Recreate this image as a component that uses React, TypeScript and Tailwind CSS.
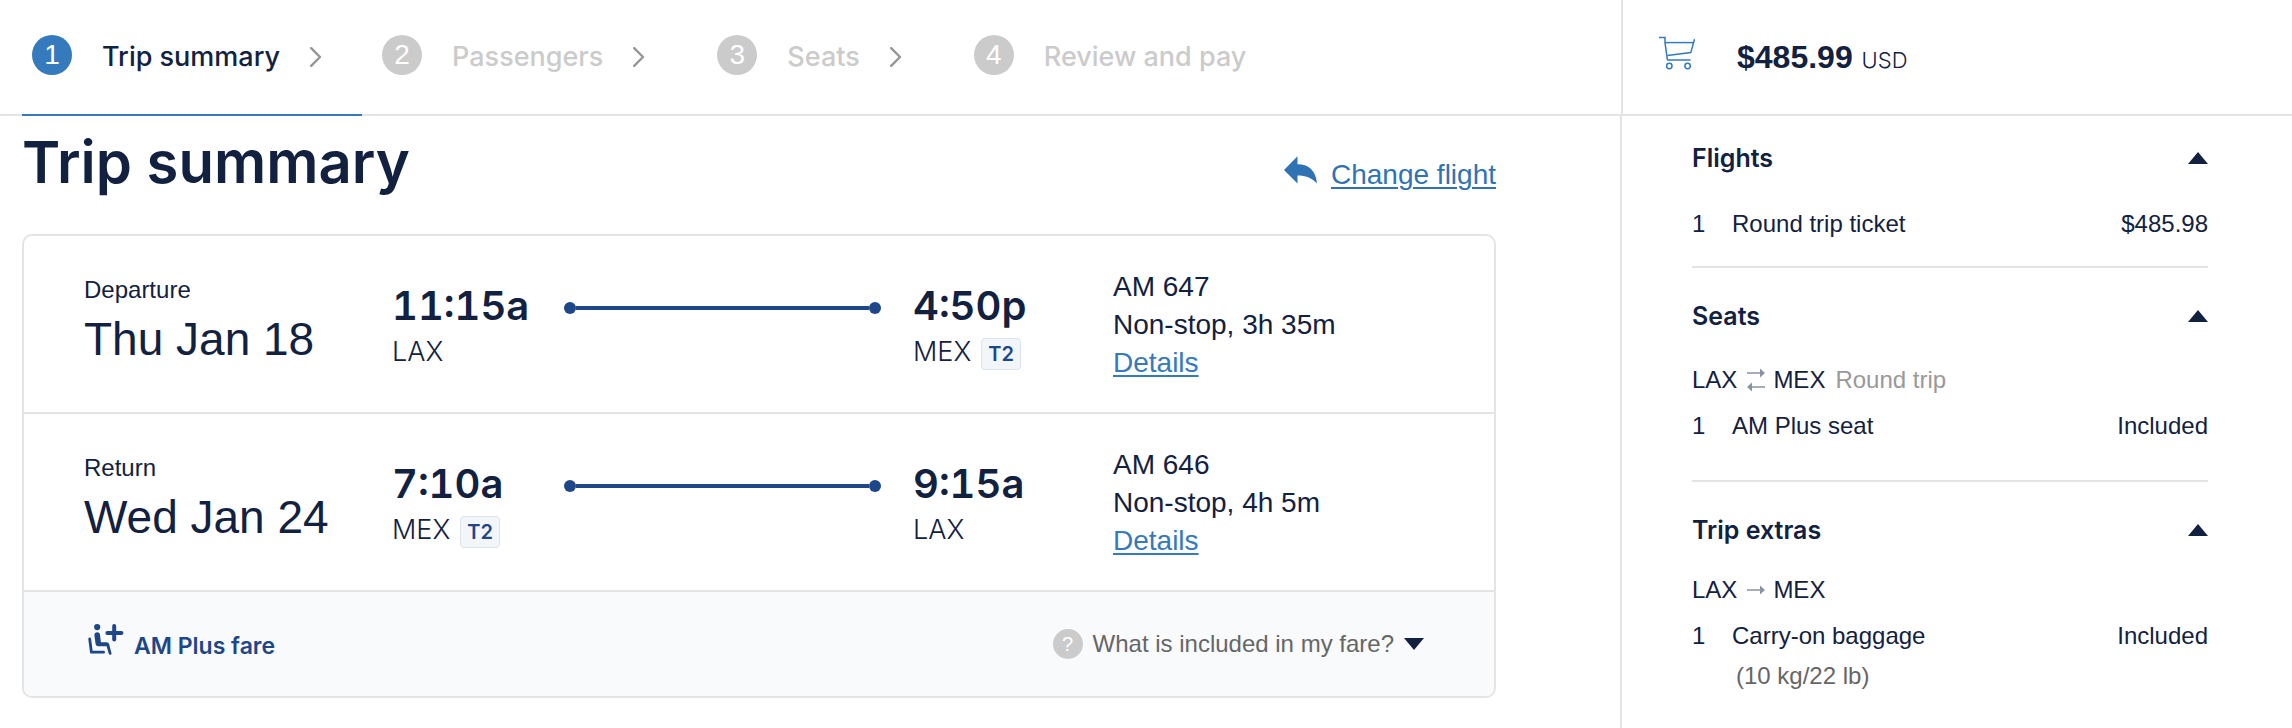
import React, { useState } from 'react';

type Step = { id: number; label: string };

type Leg = {
  title: string;
  date: string;
  departTime: string;
  departCode: string;
  departTerminal?: string;
  arriveTime: string;
  arriveCode: string;
  arriveTerminal?: string;
  flight: string;
  duration: string;
};

const steps: Step[] = [
  { id: 1, label: 'Trip summary' },
  { id: 2, label: 'Passengers' },
  { id: 3, label: 'Seats' },
  { id: 4, label: 'Review and pay' },
];

const legs: Leg[] = [
  {
    title: 'Departure',
    date: 'Thu Jan 18',
    departTime: '11:15a',
    departCode: 'LAX',
    arriveTime: '4:50p',
    arriveCode: 'MEX',
    arriveTerminal: 'T2',
    flight: 'AM 647',
    duration: 'Non-stop, 3h 35m',
  },
  {
    title: 'Return',
    date: 'Wed Jan 24',
    departTime: '7:10a',
    departCode: 'MEX',
    departTerminal: 'T2',
    arriveTime: '9:15a',
    arriveCode: 'LAX',
    flight: 'AM 646',
    duration: 'Non-stop, 4h 5m',
  },
];

const ChevronIcon = () => (
  <svg width="12" height="26" viewBox="0 0 12 26" fill="none" className="shrink-0" aria-hidden="true">
    <path d="M1.2 4.2L10 13L1.2 21.8" stroke="#969696" strokeWidth="2.4" strokeLinecap="round" strokeLinejoin="round" />
  </svg>
);

const CartIcon = () => (
  <svg width="36" height="34" viewBox="0 0 36 34" fill="none" stroke="#357abd" strokeWidth="1.5" aria-hidden="true">
    <path d="M0 1.6H6V6.6L8.4 23.8" />
    <path d="M6 6.6H34.5" />
    <path d="M35.5 3.2L31.8 16.6L8.4 19.6" />
    <path d="M8 24H31.5" />
    <circle cx="10.3" cy="30" r="2.7" />
    <circle cx="28.6" cy="30" r="2.7" />
  </svg>
);

const ReplyIcon = () => (
  <svg width="33" height="28" viewBox="0 0 33 28" fill="#3073b5" aria-hidden="true">
    <path d="M0 14L13.5 0.3V8.2C23.5 8 32 13.5 33 27.5C27.5 21.5 21 19.3 13.5 19.4V27.6Z" />
  </svg>
);

// Seated passenger with a plus sign
const SeatPlusIcon = () => (
  <svg width="36" height="31" viewBox="0 0 36 31" fill="none" stroke="#1d4789" strokeLinecap="round" strokeLinejoin="round" aria-hidden="true">
    <circle cx="9.2" cy="3.1" r="3.1" fill="#1d4789" stroke="none" />
    <path
      d="M6.4 11.2C6.2 7.6 11.6 7.4 12 10.8L12.9 18.2H18.6C20 18.2 20.8 18.9 21.2 20.2L23.5 29.2C23.8 31 21.2 31.2 20.8 29.8L18.6 22.2H10.3C8.6 22.2 7.7 21.2 7.5 19.6Z"
      fill="#1d4789"
      stroke="none"
    />
    <path d="M1.7 15L3.4 28.2H15.6" strokeWidth="2.8" />
    <path d="M26.2 2V15.6M19.4 9H33.4" strokeWidth="4" />
  </svg>
);

const Triangle = ({ down = false }: { down?: boolean }) => (
  <svg width="20" height="12" viewBox="0 0 20 12" fill="#12213f" className="shrink-0" aria-hidden="true">
    {down ? <path d="M0 0H20L10 12Z" /> : <path d="M0 12H20L10 0Z" />}
  </svg>
);

const RouteArrow = ({ roundTrip = false }: { roundTrip?: boolean }) => (
  <svg width="18" height="24" viewBox="0 0 18 24" fill="#8a93a5" className="shrink-0" aria-hidden="true">
    {roundTrip ? (
      <>
        <path d="M0 4.2H13V0.4L18 5L13 9.6V5.8H0Z" />
        <path d="M18 18.2H5V14.4L0 19L5 23.6V19.8H18Z" />
      </>
    ) : (
      <path d="M0 11.2H13V7.4L18 12L13 16.6V12.8H0Z" />
    )}
  </svg>
);

const Stop = ({ time, code, terminal }: { time: string; code: string; terminal?: string }) => (
  <div className="pt-3 font-['Inter',sans-serif]">
    <p className="text-[40px] leading-13 font-semibold tabular-nums">{time}</p>
    <div className="flex h-10 items-center gap-2.5">
      <span className="text-[27px] leading-9 font-light">{code}</span>
      {terminal && (
        <span className="mt-1 flex h-8 items-center rounded-sm border border-[#dbe3ec] bg-[#f2f5f9] px-1.5 text-xl font-semibold text-[#1d4789]">
          {terminal}
        </span>
      )}
    </div>
  </div>
);

const LegRow = ({ leg }: { leg: Leg }) => (
  <div className="grid grid-cols-[308px_172px_1fr_232px_381px] items-start border-b-2 border-[#e4e4e4] pt-8 pb-7.5 pl-15">
    <div className="pt-1">
      <p className="text-2xl leading-9">{leg.title}</p>
      <p className="text-[46px] leading-[62px]">{leg.date}</p>
    </div>
    <Stop time={leg.departTime} code={leg.departCode} terminal={leg.departTerminal} />
    <div className="flex items-center pt-8.5" aria-hidden="true">
      <span className="size-3 rounded-full bg-[#1d4789]" />
      <span className="h-1 flex-1 bg-[#1d4789]" />
      <span className="size-3 rounded-full bg-[#1d4789]" />
    </div>
    <div className="pl-8">
      <Stop time={leg.arriveTime} code={leg.arriveCode} terminal={leg.arriveTerminal} />
    </div>
    <div className="text-[28px] leading-[38px]">
      <p>{leg.flight}</p>
      <p>{leg.duration}</p>
      <a href="#details" className="text-[#357abd] underline decoration-2 underline-offset-3">Details</a>
    </div>
  </div>
);

const CartSection = ({ title, children }: { title: string; children: React.ReactNode }) => {
  const [open, setOpen] = useState(true);

  return (
    <section className="border-b-2 border-[#e4e4e4] pt-7.5 first:pt-6 last:border-b-0">
      <h2>
        <button
          type="button"
          aria-expanded={open}
          onClick={() => setOpen(!open)}
          className="flex w-full items-center justify-between font-['Inter',sans-serif] text-[25px] leading-9 font-semibold"
        >
          {title}
          <Triangle down={!open} />
        </button>
      </h2>
      {open && children}
    </section>
  );
};

const CartItem = ({ name, price }: { name: string; price: string }) => (
  <div className="flex text-2xl leading-8">
    <span className="w-10">1</span>
    <span className="flex-1">{name}</span>
    <span>{price}</span>
  </div>
);

const App: React.FC = () => {
  const [activeStep] = useState(1);

  return (
    <div className="min-h-screen bg-white font-['Liberation_Sans',Arial,sans-serif] text-[#12213f]">
      <header className="flex border-b-2 border-[#e4e4e4]">
        <nav className="flex-1 pl-[22px]">
          <ol className="-mb-0.5 flex">
            {steps.map(step => {
              const active = step.id === activeStep;
              return (
                <li
                  key={step.id}
                  aria-current={active ? 'step' : undefined}
                  className={`flex h-29 items-center border-b-2 pb-1 ${active ? 'border-[#357abd] pr-10 pl-2.5' : 'border-transparent pr-[52px] pl-5 text-[#cbcbcb]'}`}
                >
                  <span className={`flex size-10 items-center justify-center rounded-full text-[28px] text-white ${active ? 'bg-[#357abd]' : 'bg-[#cbcbcb]'}`}>
                    {step.id}
                  </span>
                  <div className="flex items-center pt-1">
                    <span className="px-[30px] font-['Inter',sans-serif] text-[27px] font-medium">{step.label}</span>
                    {step.id < steps.length && <ChevronIcon />}
                  </div>
                </li>
              );
            })}
          </ol>
        </nav>
        <div className="flex w-[671px] items-center border-l-2 border-[#e4e4e4] pl-9">
          <div className="pb-2">
            <CartIcon />
          </div>
          <p className="pl-[42px] text-[32px] font-bold">
            $485.99 <span className="font-['Inter',sans-serif] text-[22px] font-light">USD</span>
          </p>
        </div>
      </header>

      <div className="flex">
        <main className="flex-1 pr-31 pl-[22px]">
          <div className="flex h-[118px] items-start justify-between">
            <h1 className="pt-1 font-['Inter',sans-serif] text-[58px] leading-[84px] font-semibold">Trip summary</h1>
            <a href="#change" className="flex items-start gap-3.5 pt-10 text-[28px] leading-[38px] text-[#3073b5]">
              <ReplyIcon />
              <span className="underline decoration-2 underline-offset-3">Change flight</span>
            </a>
          </div>

          <div className="overflow-hidden rounded-[10px] border-2 border-[#e4e4e4]">
            {legs.map(leg => (
              <LegRow key={leg.title} leg={leg} />
            ))}
            <div className="flex h-26 items-center justify-between bg-[#f9fafc] pr-[70px] pl-16">
              <div className="flex items-start gap-2.5 font-['Inter',sans-serif] text-[23px] leading-9 font-semibold text-[#1d4789]">
                <SeatPlusIcon />
                <span className="pt-1">AM Plus fare</span>
              </div>
              <button type="button" className="flex items-center gap-2.5 text-2xl text-[#666]">
                <span className="flex size-[30px] items-center justify-center rounded-full bg-[#cbcbcb] text-xl text-white">?</span>
                What is included in my fare?
                <Triangle down />
              </button>
            </div>
          </div>
        </main>

        <aside className="min-h-[612px] w-[672px] border-l-2 border-[#e4e4e4] pr-21 pl-[70px]">
          <CartSection title="Flights">
            <div className="pt-8 pb-6.5">
              <CartItem name="Round trip ticket" price="$485.98" />
            </div>
          </CartSection>
          <CartSection title="Seats">
            <div className="pt-7.5 pb-9.5 text-2xl leading-8">
              <p className="mb-3.5 flex items-center">
                LAX<span className="pr-2 pl-2.5"><RouteArrow roundTrip /></span>MEX
                <span className="pl-2.5 text-[#999]">Round trip</span>
              </p>
              <CartItem name="AM Plus seat" price="Included" />
            </div>
          </CartSection>
          <CartSection title="Trip extras">
            <div className="pt-6.5 text-2xl leading-8">
              <p className="mb-3.5 flex items-center">
                LAX<span className="pr-2 pl-2.5"><RouteArrow /></span>MEX
              </p>
              <CartItem name="Carry-on baggage" price="Included" />
              <p className="pt-2 pl-11 text-[#666]">(10 kg/22 lb)</p>
            </div>
          </CartSection>
        </aside>
      </div>
    </div>
  );
};

export default App;
